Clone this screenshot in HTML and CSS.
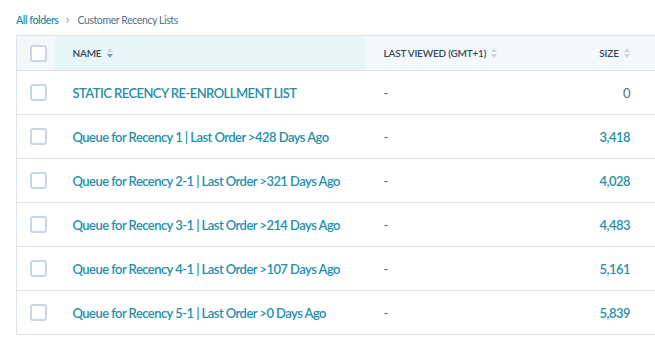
FILE: index.html
```html
<!DOCTYPE html>
<html lang="en">
<head>
    <meta charset="UTF-8">
    <meta name="viewport" content="width=device-width, initial-scale=1.0">
    <title>Customer Recency Lists</title>
    <link rel="stylesheet" href="styles.css">
</head>
<body>

    <!-- Fil d'Ariane -->
    <nav class="breadcrumb">
        <a href="#">All folders</a>
        <span class="sep">&rsaquo;</span>
        <span class="current">Customer Recency Lists</span>
    </nav>

    <div class="table-container">
        <table id="lists">
            <colgroup>
                <col class="w-check">
                <col class="w-name">
                <col class="w-viewed">
                <col class="w-size">
            </colgroup>
            <thead>
                <tr>
                    <th class="col-check"><span class="checkbox"></span></th>
                    <th class="col-name sorted">Name <span class="sort"><i class="up"></i><i class="down"></i></span></th>
                    <th class="col-viewed">Last viewed (GMT+1) <span class="sort"><i class="up"></i><i class="down"></i></span></th>
                    <th class="col-size">Size <span class="sort"><i class="up"></i><i class="down"></i></span></th>
                </tr>
            </thead>
            <tbody>
                <!-- rows -->
            </tbody>
        </table>
    </div>

    <script>
        const lists = [
            { name: "STATIC RECENCY RE-ENROLLMENT LIST", size: "0" },
            { name: "Queue for Recency 1 | Last Order >428 Days Ago", size: "3,418" },
            { name: "Queue for Recency 2-1 | Last Order >321 Days Ago", size: "4,028" },
            { name: "Queue for Recency 3-1 | Last Order >214 Days Ago", size: "4,483" },
            { name: "Queue for Recency 4-1 | Last Order >107 Days Ago", size: "5,161" },
            { name: "Queue for Recency 5-1 | Last Order >0 Days Ago", size: "5,839" }
        ];

        const tbody = document.querySelector("#lists tbody");
        lists.forEach((list) => {
            const sizeClass = list.size === "0" ? "size-zero" : "size-link";
            tbody.innerHTML += `
                <tr>
                    <td class="col-check"><span class="checkbox"></span></td>
                    <td class="col-name"><a href="#">${list.name}</a></td>
                    <td class="col-viewed">-</td>
                    <td class="col-size"><span class="${sizeClass}">${list.size}</span></td>
                </tr>
            `;
        });
    </script>
</body>
</html>
```

FILE: styles.css
```css
body {
    font-family: Lato, "Open Sans", sans-serif;
    margin: 0;
    padding: 10px 0 0 16px;
    background-color: #fff;
    color: #33475b;
    overflow: hidden;
}

a {
    color: #1f8fab;
    text-decoration: none;
}

.breadcrumb {
    font-size: 10.5px;
    letter-spacing: -0.4px;
    height: 18px;
    line-height: 18px;
    margin-bottom: 7px;
}

.breadcrumb a {
    font-weight: 600;
}

.breadcrumb .sep {
    color: #7c98b6;
    margin: 0 6px 0 5px;
    font-size: 13px;
}

.breadcrumb .current {
    color: #516f90;
}

.table-container {
    width: 639px;
}

table {
    width: 100%;
    table-layout: fixed;
    border-collapse: collapse;
    border-left: 1px solid #dfe3eb;
    border-top: 1px solid #dfe3eb;
}

.w-check { width: 38px; }
.w-name { width: 310px; }
.w-viewed { width: 200px; }

table th, table td {
    border-bottom: 1px solid #dfe3eb;
    text-align: left;
    padding: 0 19px;
    white-space: nowrap;
}

table th {
    height: 34px;
    background-color: #f5f8fa;
    font-size: 10px;
    font-weight: 600;
    letter-spacing: -0.2px;
    text-transform: uppercase;
    color: #33475b;
}

table th.sorted {
    background-color: #e5f5f8;
}

table td {
    height: 43px;
    font-size: 13px;
    letter-spacing: -0.55px;
}

table .col-check {
    padding: 0 0 0 13px;
}

table .col-name {
    padding-left: 18px;
}

.col-name a {
    font-weight: 600;
}

td.col-viewed {
    color: #516f90;
}

table th.col-size, table td.col-size {
    text-align: right;
    padding-right: 25px;
}

.size-link {
    color: #1f8fab;
    font-weight: 600;
}

.size-zero {
    color: #516f90;
}

.checkbox {
    display: block;
    width: 13px;
    height: 13px;
    border: 2px solid #cbd6e2;
    border-radius: 3px;
    background: #fff;
}

.sort {
    display: inline-flex;
    flex-direction: column;
    gap: 2px;
    vertical-align: middle;
    margin-left: 3px;
    position: relative;
    top: -1px;
}

.sort i {
    display: block;
    width: 0;
    height: 0;
    border-left: 3.5px solid transparent;
    border-right: 3.5px solid transparent;
}

.sort .up {
    border-bottom: 4px solid #cbd6e2;
}

.sort .down {
    border-top: 4px solid #cbd6e2;
}

.sorted .sort .down {
    border-top-color: #7c98b6;
}
```
